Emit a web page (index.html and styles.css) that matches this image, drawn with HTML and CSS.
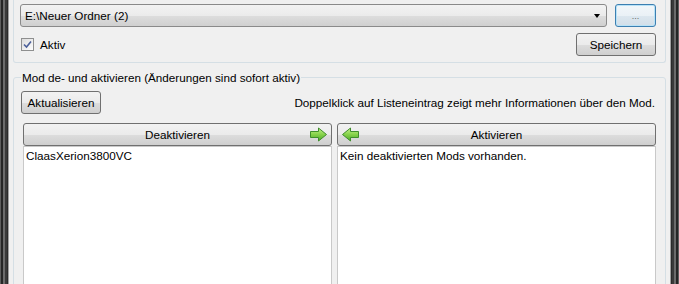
FILE: index.html
```html
<!DOCTYPE html>
<html lang="de">
<head>
  <meta charset="UTF-8">
  <title>Mod Manager</title>
  <link rel="stylesheet" href="styles.css">
</head>
<body>
  <div class="window">
    <div class="frame frame-left"></div>
    <div class="client">
      <div class="group group-top">
        <div class="row">
          <div class="combo">
            <span>E:\Neuer Ordner (2)</span>
            <span class="combo-arrow"></span>
          </div>
          <button class="btn btn-browse">...</button>
        </div>
        <div class="row row-save">
          <label class="check">
            <span class="box">
              <svg width="9" height="9" viewBox="0 0 9 9"><path d="M1 4.5 L3.5 7 L8 1.5" fill="none" stroke="#4b5f9a" stroke-width="1.6"/></svg>
            </span>
            Aktiv
          </label>
          <button class="btn btn-save">Speichern</button>
        </div>
      </div>

      <fieldset class="group group-mods">
        <legend>Mod de- und aktivieren (Änderungen sind sofort aktiv)</legend>
        <div class="row row-refresh">
          <button class="btn btn-refresh">Aktualisieren</button>
          <span class="hint">Doppelklick auf Listeneintrag zeigt mehr Informationen über den Mod.</span>
        </div>
        <div class="lists">
          <div class="col">
            <button class="btn btn-head">
              Deaktivieren
              <svg class="arrow arrow-right" width="19" height="15" viewBox="0 0 19 15">
                <defs>
                  <linearGradient id="ga" x1="0" y1="0" x2="0" y2="1">
                    <stop offset="0" stop-color="#c6f08e"/>
                    <stop offset="0.5" stop-color="#86d24a"/>
                    <stop offset="1" stop-color="#4ea82a"/>
                  </linearGradient>
                </defs>
                <path d="M1.5 4.5 H9.5 V1 L17.5 7.5 L9.5 14 V10.5 H1.5 Z" fill="url(#ga)" stroke="#3f8e2c" stroke-linejoin="round"/>
              </svg>
            </button>
            <div class="listbox">ClaasXerion3800VC</div>
          </div>
          <div class="col">
            <button class="btn btn-head">
              <svg class="arrow arrow-left" width="19" height="15" viewBox="0 0 19 15">
                <path d="M17.5 4.5 H9.5 V1 L1.5 7.5 L9.5 14 V10.5 H17.5 Z" fill="url(#ga)" stroke="#3f8e2c" stroke-linejoin="round"/>
              </svg>
              Aktivieren
            </button>
            <div class="listbox">Kein deaktivierten Mods vorhanden.</div>
          </div>
        </div>
      </fieldset>
    </div>
    <div class="frame frame-right"></div>
  </div>
</body>
</html>
```

FILE: styles.css
```css
html, body {
  margin: 0;
  height: 100%;
  overflow: hidden;
}
body {
  background: #f0f0f0;
  font-family: "Liberation Sans", Arial, sans-serif;
  font-size: 11.7px;
  color: #000;
}
.window {
  display: flex;
  height: 284px;
  overflow: hidden;
}
.frame {
  width: 9px;
  flex: none;
}
.frame-left {
  background: linear-gradient(to right, #5e5e5e 0, #5e5e5e 1px, #262626 1px, #262626 3px, #6c6c6c 3px, #6c6c6c 5px, #3a3a3a 5px, #3a3a3a 7px, #2a2a2a 7px, #2a2a2a 8px, #a0a0a0 8px);
}
.frame-right {
  background: linear-gradient(to right, #a0a0a0 0, #a0a0a0 1px, #2a2a2a 1px, #2a2a2a 2px, #3a3a3a 2px, #3a3a3a 4px, #6c6c6c 4px, #6c6c6c 6px, #262626 6px, #262626 8px, #5e5e5e 8px);
}
.client {
  flex: 1;
  padding: 0 4px 0 4px;
}
.group {
  border: 1px solid #d5dfe5;
  border-radius: 3px;
  margin: 0;
}
.group-top {
  border-top: none;
  border-radius: 0 0 3px 3px;
  padding: 4px 9px 6px 6px;
}
.row {
  display: flex;
  align-items: center;
}
.row-save {
  margin-top: 6px;
  justify-content: space-between;
}
.combo {
  flex: 1;
  height: 23px;
  box-sizing: border-box;
  border: 1px solid #8a8a8a;
  border-radius: 3px;
  background: linear-gradient(#f3f3f3 0%, #ebebeb 50%, #dddddd 51%, #d0d0d0 100%);
  display: flex;
  align-items: center;
  justify-content: space-between;
  padding: 0 6px 0 4px;
}
.combo-arrow {
  width: 0;
  height: 0;
  border-left: 3.5px solid transparent;
  border-right: 3.5px solid transparent;
  border-top: 4px solid #000;
}
.btn {
  font: inherit;
  color: #000;
  height: 23px;
  box-sizing: border-box;
  border: 1px solid #707070;
  border-radius: 3px;
  background: linear-gradient(#f2f2f2 0%, #ebebeb 50%, #dddddd 51%, #cfcfcf 100%);
  padding: 0;
  cursor: default;
}
.btn-browse {
  width: 41px;
  margin-left: 8px;
  border-color: #3c7fb1;
  box-shadow: inset 0 0 0 1px #b8e2f7;
  background: linear-gradient(#f2f7fa 0%, #eaf1f6 50%, #dce7ef 51%, #d2dee8 100%);
  color: #6b6b6b;
  font-size: 9px;
}
.btn-save {
  width: 80px;
}
.check {
  display: flex;
  align-items: center;
  margin-left: 1px;
}
.box {
  width: 13px;
  height: 13px;
  box-sizing: border-box;
  border: 1px solid #8e8f8f;
  background: linear-gradient(135deg, #dcdcdc, #fdfdfd);
  display: flex;
  align-items: center;
  justify-content: center;
  margin-right: 6px;
}
.group-mods {
  margin-top: 8px;
  padding: 7px 9px 0 7px;
}
.group-mods legend {
  padding: 0 1px;
  line-height: 13px;
}
.row-refresh {
  justify-content: space-between;
}
.btn-refresh {
  width: 80px;
}
.hint {
  margin-right: 1px;
}
.lists {
  margin-top: 9px;
  margin-left: 2px;
  display: grid;
  grid-template-columns: 309px 319px;
  column-gap: 5px;
}
.btn-head {
  width: 100%;
  display: flex;
  align-items: center;
  justify-content: center;
  position: relative;
}
.arrow {
  position: absolute;
  top: 3px;
}
.arrow-right {
  right: 3px;
}
.arrow-left {
  left: 3px;
}
.listbox {
  height: 140px;
  background: #fff;
  border: 1px solid #c9c9c9;
  padding: 2px 2px;
}
```
